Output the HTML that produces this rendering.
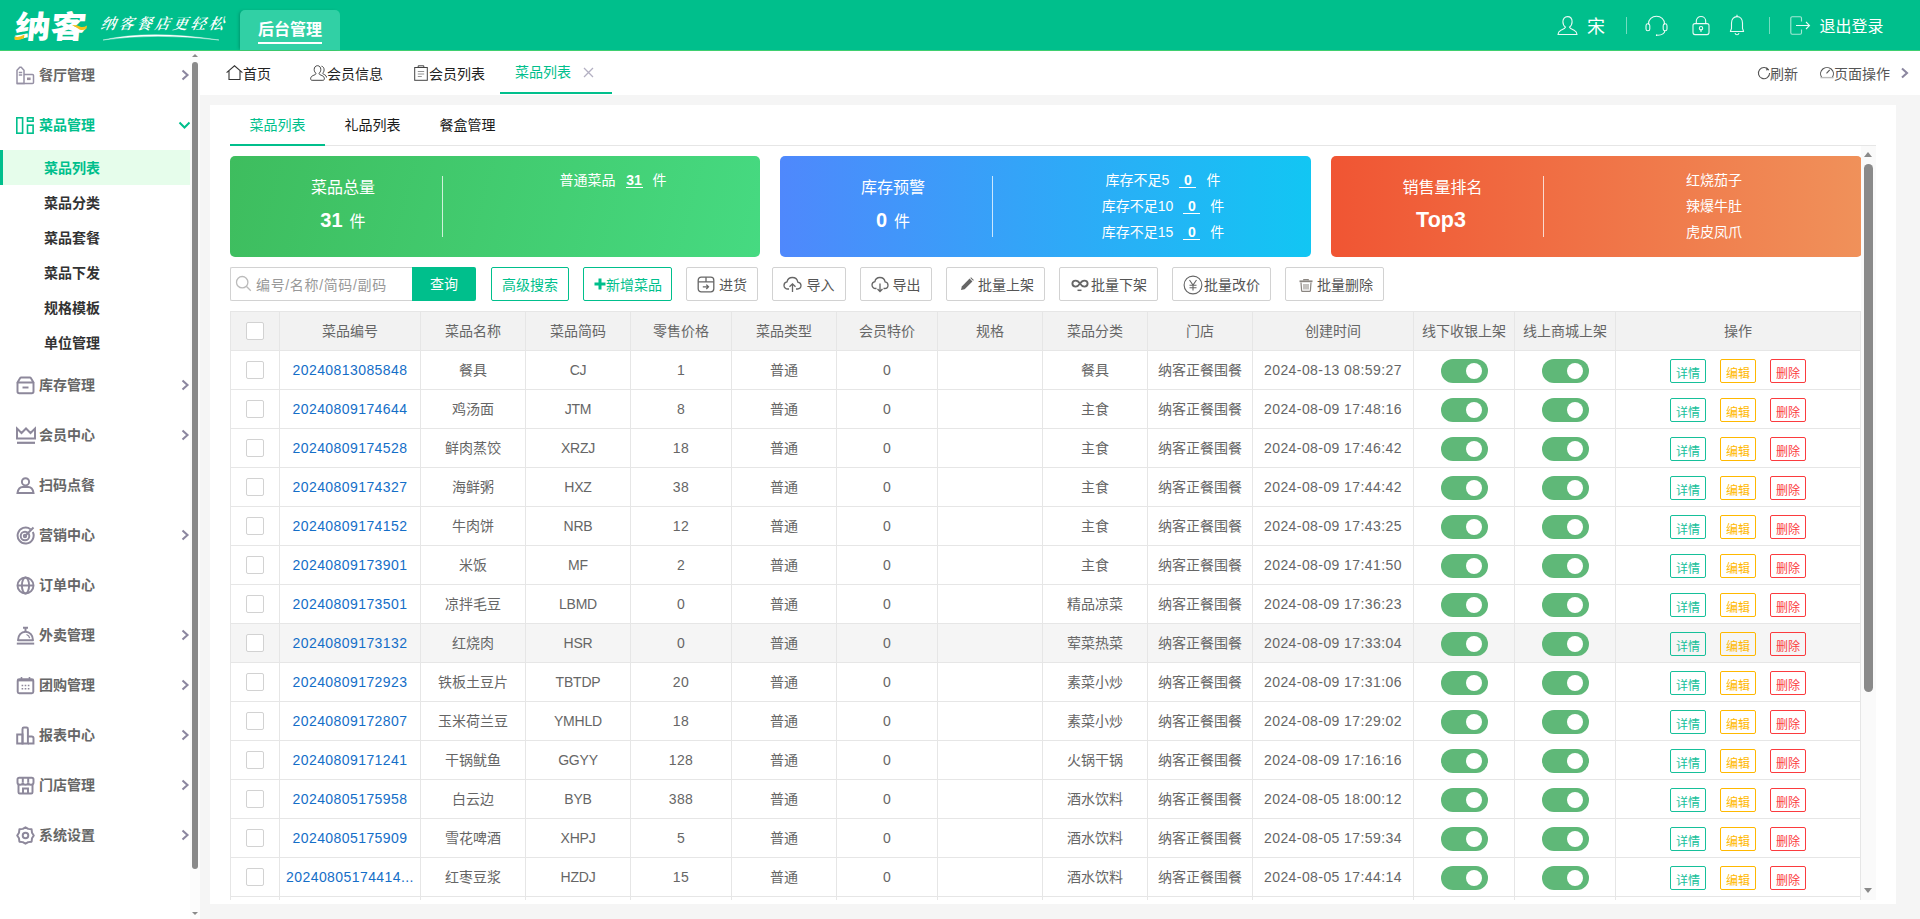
<!DOCTYPE html>
<html lang="zh-CN">
<head>
<meta charset="utf-8">
<title>菜品列表</title>
<style>
*{box-sizing:border-box;margin:0;padding:0}
html,body{width:1920px;height:919px;overflow:hidden;background:#f5f5f5}
body{font-family:"Liberation Sans","Noto Sans CJK SC",sans-serif;font-size:14px;color:#666;position:relative}
i,b{font-style:normal;font-weight:normal}
svg{display:block}
.abs{position:absolute}
/* header */
#hdr{position:absolute;left:0;top:0;width:1920px;height:51px;background:#00bf8c;border-bottom:1px solid #3fcf70;color:#fff}
#logo{position:absolute;left:14px;top:7px;width:76px;height:38px}
#logo span{position:absolute;left:1px;top:.5px;font-size:31px;line-height:40px;font-weight:900;letter-spacing:0;color:#fff;white-space:nowrap;transform:scaleX(1.15) skewX(-5deg);transform-origin:0 50%}
#slogan{position:absolute;left:101px;top:9.500px;width:130px;height:26px;font-family:"Noto Serif CJK SC","Liberation Serif",serif;font-style:italic;font-weight:600;font-size:15px;letter-spacing:3px;line-height:26px;white-space:nowrap;color:#fff;transform:skewX(-10deg)}
#topt{position:absolute;left:240px;top:10px;width:100px;height:40px;background:#31d0a5;border-radius:5px 5px 0 0;box-shadow:-2px 0 3px -1px rgba(0,80,60,.35)}
#topt span{position:absolute;left:18px;top:8px;font-size:16px;font-weight:bold;line-height:24px;white-space:nowrap}
#topt u{position:absolute;left:18px;top:32px;width:64px;height:2px;background:#fff}
.hi{position:absolute;top:0}
.ht{position:absolute;white-space:nowrap;line-height:24px}
.hd{position:absolute;top:17px;width:1px;height:17px;background:rgba(255,255,255,.45)}
/* sidebar */
#side{position:absolute;left:0;top:51px;width:190px;height:868px;background:#fff}
.mi{position:absolute;left:0;width:190px;height:50px}
.mi svg.ic{position:absolute;left:15.500px;top:16px}
.mi span{position:absolute;left:39px;top:13px;line-height:24px;font-weight:bold;color:#666;white-space:nowrap}
.mi svg.ar{position:absolute;left:181px;top:19px}
.mi.on span{color:#00bf8c}
.si{position:absolute;left:0;width:190px;height:35px;line-height:37px;overflow:hidden;padding-left:44px;font-weight:bold;color:#333;white-space:nowrap}
.si.on{background:#e6fdeb;color:#00bf8c;border-left:3px solid #00bf8c;padding-left:41px}
#sb1{position:absolute;left:190px;top:51px;width:10px;height:868px;background:#fcfcfc}
#sb1 i.th{position:absolute;left:2px;top:11px;width:6px;height:807px;border-radius:3px;background:#8a8a8a}
.tri-u{position:absolute;width:0;height:0;border-left:4px solid transparent;border-right:4px solid transparent;border-bottom:4px solid #8a8a8a}
.tri-d{position:absolute;width:0;height:0;border-left:4px solid transparent;border-right:4px solid transparent;border-top:4px solid #8a8a8a}
/* tabs */
#tabs{position:absolute;left:200px;top:51px;width:1720px;height:44px;background:#fff;color:#222}
#tabs .t{position:absolute;top:11px;line-height:24px;white-space:nowrap}
#tabs svg{position:absolute}
/* panel */
#panel{position:absolute;left:210px;top:105px;width:1686px;height:799px;background:#fff}
#sub{position:absolute;left:20px;top:0;width:1646px;height:41px;border-bottom:1px solid #e6e6e6}
#sub span{position:absolute;top:8px;width:95px;text-align:center;line-height:24px;color:#1a1a1a}
#sub span.on{color:#00bf8c}
#sub u{position:absolute;left:0;top:39px;width:95px;height:2px;background:#00bf8c}
#scroll{position:absolute;left:20px;top:41px;width:1646px;height:754px;overflow:hidden}
#sb2{position:absolute;left:1631px;top:0;width:15px;height:754px;background:#fafafa}
#sb2 i.th{position:absolute;left:3px;top:18px;width:9px;height:528px;border-radius:4.5px;background:#8a8a8a}
.card{position:absolute;top:10px;width:530.5px;height:101px;border-radius:5px;color:#fff}
.card .l1{position:absolute;left:33px;width:160px;top:20px;text-align:center;font-size:16px;line-height:24px;white-space:nowrap}
.card .l2{position:absolute;left:33px;width:160px;top:49px;text-align:center;font-size:16px;line-height:30px;white-space:nowrap}
.card .l2 b{font-weight:bold;font-size:20px;margin-right:7px}
.card .dv{position:absolute;left:212px;top:20px;width:1px;height:61px;background:rgba(255,255,255,.75)}
.card .r{position:absolute;left:233px;width:300px;text-align:center;line-height:26px;white-space:nowrap}
.card .r b{display:inline-block;min-width:17px;height:26px;text-align:center;font-weight:bold;margin:0 10px;background:linear-gradient(#fff,#fff) no-repeat 0 20px/100% 1px;vertical-align:top}
/* toolbar */
.btn{position:absolute;top:121px;height:34px;border:1px solid #d2d2d2;border-radius:2px;background:#fff;color:#555;line-height:31px;white-space:nowrap}
.btn span{position:absolute;top:2px;line-height:31px}
.btn svg{position:absolute}
.btn.g{border-color:#00bf8c;color:#00bf8c}
#q{position:absolute;left:0;top:121px;width:183px;height:34px;border:1px solid #d2d2d2;border-right:none;border-radius:2px 0 0 2px;background:#fff}
#q span{position:absolute;left:25px;top:2px;line-height:31px;color:#999;white-space:nowrap;letter-spacing:.65px}
#qb{position:absolute;left:182px;top:121px;width:64px;height:34px;background:#00bf8c;color:#fff;text-align:center;line-height:35px;border-radius:0 2px 2px 0}
/* table */
table{position:absolute;left:0;top:165px;border-collapse:separate;border-spacing:0;table-layout:fixed;width:1631px;border-left:1px solid #e6e6e6;border-top:1px solid #e6e6e6}
th,td{height:39px;border-right:1px solid #e6e6e6;border-bottom:1px solid #e6e6e6;text-align:center;font-weight:normal;white-space:nowrap;overflow:hidden;padding:0;color:#666;vertical-align:middle;line-height:20px}
th{background:#f2f2f2}
tr.hov td{background:#f5f5f5}
td.n{letter-spacing:.42px}
td.c{letter-spacing:-.2px}
td a{color:#146ec8}
.cb{display:inline-block;width:18px;height:18px;border:1px solid #d2d2d2;border-radius:2px;background:#fff;vertical-align:middle;margin-left:0;position:relative;top:-1px}
.sw{display:inline-block;width:47px;height:24px;border-radius:12px;background:#5fb878;vertical-align:middle;position:relative;top:1px}
.sw:after{content:"";position:absolute;left:25px;top:4px;width:16px;height:16px;border-radius:8px;background:#fff}
.op b{display:inline-block;width:36px;height:24px;line-height:29px;overflow:hidden;border:1px solid;border-radius:2px;font-size:12px;margin:0 7px;vertical-align:middle;position:relative;top:1px;left:0;letter-spacing:0;padding-top:0}
.b1{color:#16c09a;border-color:#16c09a}
.b2{color:#ffb800;border-color:#ffc93c}
.b3{color:#fb3b3e;border-color:#fb3b3e}
</style>
</head>
<body>
<div id="hdr">
  <div id="logo"><span>纳客</span>
    <svg class="abs" style="left:0;top:0" width="76" height="38" viewBox="0 0 76 38"><path d="M0.500 29.500 Q5 31 10.500 27.500 L10 31 Q5 34 0.500 32.500Z" fill="#f6c21c"/><path d="M58 18 Q63 17.500 67 20 Q70 20.500 73 18.500 L72.500 21.500 Q69 24 65.500 22.500 Q62 20 58 18Z" fill="#f6c21c"/></svg>
  </div>
  <div id="slogan">纳客餐店更轻松</div>
  <svg class="abs" style="left:100px;top:32px" width="122" height="10" viewBox="0 0 122 10"><path d="M3 8 Q50 -2.500 119 8 Q55 0.500 3 8Z" fill="#fff" stroke="#fff" stroke-width=".4"/></svg>
  <div id="topt"><span>后台管理</span><u></u></div>
  <!-- user -->
  <svg class="hi" style="left:1556px;top:14px" width="23" height="23" viewBox="0 0 23 23" fill="none" stroke="#fff" stroke-opacity=".92" stroke-width="1.100"><path d="M11.5 2.6c2.8 0 4.6 2.2 4.6 5.2 0 2.300-1.100 4.300-2.600 5.300 0.300 1.500 2.500 2.200 4.600 3.200 1.800 0.900 2.800 2.300 2.900 4.200H2c0.100-1.900 1.100-3.300 2.900-4.200 2.100-1 4.300-1.700 4.600-3.200-1.500-1-2.600-3-2.600-5.300 0-3 1.800-5.200 4.600-5.200z"/></svg>
  <span class="ht" style="left:1587px;top:14.500px;font-size:18px">宋</span>
  <i class="hd" style="left:1626px"></i>
  <!-- headset -->
  <svg class="hi" style="left:1644px;top:14px" width="25" height="23" viewBox="0 0 25 23" fill="none" stroke="#fff" stroke-opacity=".92" stroke-width="1.100"><path d="M4.500 10.500V9.800c0-4.300 3.500-7.500 8-7.500s8 3.200 8 7.500v0.700"/><rect x="2" y="9.800" width="3.800" height="7" rx="1.900"/><rect x="19.200" y="9.800" width="3.800" height="7" rx="1.900"/><path d="M20.800 16.800c0 2.400-2.800 4.400-7 4.400"/><circle cx="12.800" cy="21.200" r=".9" fill="#fff" stroke="none"/></svg>
  <!-- lock -->
  <svg class="hi" style="left:1690px;top:14px" width="22" height="23" viewBox="0 0 22 23" fill="none" stroke="#fff" stroke-opacity=".92" stroke-width="1.100"><rect x="3" y="9.600" width="16" height="11" rx="2"/><path d="M6.300 9.600V7c0-2.600 2-4.500 4.700-4.500s4.700 1.900 4.700 4.500v2.600"/><circle cx="11" cy="14.200" r="1.700"/><path d="M11 15.900v2"/></svg>
  <!-- bell -->
  <svg class="hi" style="left:1726px;top:13px" width="22" height="24" viewBox="0 0 22 24" fill="none" stroke="#fff" stroke-opacity=".92" stroke-width="1.100"><path d="M11 3.600c3.300 0 5.500 2.600 5.500 6.300v5.500l1.100 3.100H4.400l1.100-3.100V9.900c0-3.700 2.200-6.300 5.500-6.300z" stroke-linejoin="round"/><path d="M11 1.800v1.800"/><path d="M9 20.200c0.300 1.100 1 1.600 2 1.600s1.700-0.500 2-1.600"/></svg>
  <i class="hd" style="left:1769px"></i>
  <!-- logout -->
  <svg class="hi" style="left:1788px;top:14px" width="24" height="23" viewBox="0 0 24 23" fill="none" stroke="#fff" stroke-opacity=".92" stroke-width="1.100"><path d="M13.500 7.500V4.200c0-0.800-0.600-1.400-1.400-1.400H4.200c-0.800 0-1.400 0.600-1.400 1.400v14.600c0 0.800 0.600 1.400 1.400 1.400h7.900c0.800 0 1.400-0.600 1.400-1.400v-3.300" opacity=".7"/><path d="M8 11.500h13.500M18 8l3.500 3.500L18 15"/></svg>
  <span class="ht" style="left:1819.500px;top:14.500px;font-size:16px">退出登录</span>
</div>

<div id="side">
  <div class="mi" style="top:-1px"><svg class="ic" width="19" height="19" viewBox="0 0 19 19" fill="none" stroke="#9691a5" stroke-width="1.500"><path d="M1 17.500V4.300L3.800 1.200H5.200L8 4.300V17.500Z"/><path d="M8 8.500h8.500c0.600 0 1 0.400 1 1v7c0 0.600-0.400 1-1 1H1"/><path d="M2.800 6.500h3.400M2.800 9h3.400"/><rect x="11" y="11.500" width="3.600" height="2.600" fill="#9a8f9e" stroke="none"/></svg><span>餐厅管理</span><svg class="ar" width="9" height="12" viewBox="0 0 9 12" fill="none" stroke="#8c87a0" stroke-width="2.100"><path d="M1.500 1.500L6.500 6L1.500 10.500"/></svg></div>
  <div class="mi on" style="top:49px"><svg class="ic" width="19" height="19" viewBox="0 0 19 19" fill="none" stroke="#00bf8c" stroke-width="1.600"><rect x="0.800" y="1.800" width="5.800" height="15.400"/><rect x="11.500" y="1.800" width="5.600" height="3.400"/><rect x="11.500" y="9.200" width="5.600" height="8"/></svg><span>菜品管理</span><svg class="ar" style="left:178px;top:20px" width="13" height="10" viewBox="0 0 13 10" fill="none" stroke="#00bf8c" stroke-width="2"><path d="M1.500 2.500L6.500 7.500L11.500 2.500"/></svg></div>
  <div class="si on" style="top:99px">菜品列表</div>
  <div class="si" style="top:134px">菜品分类</div>
  <div class="si" style="top:169px">菜品套餐</div>
  <div class="si" style="top:204px">菜品下发</div>
  <div class="si" style="top:239px">规格模板</div>
  <div class="si" style="top:274px">单位管理</div>
  <div class="mi" style="top:309px"><svg class="ic" width="19" height="19" viewBox="0 0 19 19" fill="none" stroke="#8d889b" stroke-width="1.950"><path d="M1.500 6.500L4 2.200c0.300-0.500 0.700-0.700 1.200-0.700h8.600c0.500 0 0.900 0.200 1.200 0.700L17.500 6.500z" stroke-linejoin="round"/><path d="M1.500 6.500v9c0 1 0.700 1.700 1.700 1.700h12.600c1 0 1.700-0.700 1.700-1.700v-9"/><path d="M6.500 11.500h6"/></svg><span>库存管理</span><svg class="ar" width="9" height="12" viewBox="0 0 9 12" fill="none" stroke="#8c87a0" stroke-width="2.100"><path d="M1.500 1.500L6.500 6L1.500 10.500"/></svg></div>
  <div class="mi" style="top:359px"><svg class="ic" width="20" height="19" viewBox="0 0 20 19" fill="none" stroke="#8d889b" stroke-width="1.950"><path d="M1 2.500L5.500 7L10 2.500L14.500 7L19 2.500V12.500H1Z"/><path d="M1 16.800h18" stroke-width="2.200"/></svg><span>会员中心</span><svg class="ar" width="9" height="12" viewBox="0 0 9 12" fill="none" stroke="#8c87a0" stroke-width="2.100"><path d="M1.500 1.500L6.500 6L1.500 10.500"/></svg></div>
  <div class="mi" style="top:409px"><svg class="ic" width="19" height="19" viewBox="0 0 19 19" fill="none" stroke="#8d889b" stroke-width="1.950"><circle cx="9.500" cy="5.800" r="3.600"/><path d="M1.500 17c0.500-3.500 2.500-6 5.200-6h5.600c2.700 0 4.700 2.500 5.200 6z"/></svg><span>扫码点餐</span></div>
  <div class="mi" style="top:459px"><svg class="ic" width="19" height="19" viewBox="0 0 19 19" fill="none" stroke="#8d889b" stroke-width="1.950"><path d="M14.500 3.200A8 8 0 1 0 16.800 6"/><circle cx="9" cy="10" r="4.300"/><circle cx="9" cy="10" r="1.200"/><path d="M9.500 9.500L17.500 1.500"/></svg><span>营销中心</span><svg class="ar" width="9" height="12" viewBox="0 0 9 12" fill="none" stroke="#8c87a0" stroke-width="2.100"><path d="M1.500 1.500L6.500 6L1.500 10.500"/></svg></div>
  <div class="mi" style="top:509px"><svg class="ic" width="19" height="19" viewBox="0 0 19 19" fill="none" stroke="#8d889b" stroke-width="1.950"><circle cx="9.500" cy="9.500" r="8"/><ellipse cx="9.500" cy="9.500" rx="3.600" ry="8"/><path d="M1.500 9.500h16"/></svg><span>订单中心</span></div>
  <div class="mi" style="top:559px"><svg class="ic" width="19" height="19" viewBox="0 0 19 19" fill="none" stroke="#8d889b" stroke-width="1.950"><path d="M2 14.200c0-4.800 3.200-8.400 7.500-8.400s7.500 3.600 7.500 8.400z" stroke-linejoin="round"/><path d="M0.800 17.600h17.400"/><path d="M7 1.800h5M9.500 1.800v4"/><path d="M10.500 8.500c1.800 0.600 2.900 2 3.200 3.600" stroke-width="1.300"/></svg><span>外卖管理</span><svg class="ar" width="9" height="12" viewBox="0 0 9 12" fill="none" stroke="#8c87a0" stroke-width="2.100"><path d="M1.500 1.500L6.500 6L1.500 10.500"/></svg></div>
  <div class="mi" style="top:609px"><svg class="ic" width="19" height="19" viewBox="0 0 19 19" fill="none" stroke="#8d889b" stroke-width="1.950"><rect x="1.700" y="3.200" width="15.600" height="14" rx="1.500"/><path d="M1.700 4.200h15.600" stroke-width="2.400"/><path d="M5.500 1v3M13.500 1v3" stroke-width="1.600"/><path d="M5.600 9.500h1.600M8.700 9.500h1.600M11.800 9.500h1.600M5.600 12.800h1.600M8.700 12.800h1.600M11.800 12.800h1.600" stroke-width="1.600"/></svg><span>团购管理</span><svg class="ar" width="9" height="12" viewBox="0 0 9 12" fill="none" stroke="#8c87a0" stroke-width="2.100"><path d="M1.500 1.500L6.500 6L1.500 10.500"/></svg></div>
  <div class="mi" style="top:659px"><svg class="ic" width="19" height="19" viewBox="0 0 19 19" fill="none" stroke="#8d889b" stroke-width="1.950"><path d="M1.200 17.500V8.500h5.300v9z"/><path d="M6.500 17.500V3c0-0.800 0.600-1.500 1.400-1.500h2.600c0.800 0 1.400 0.700 1.400 1.500v14.500z"/><path d="M11.900 10.500h3.800c1 0 1.800 0.800 1.800 1.800v5.200h-5.600"/></svg><span>报表中心</span><svg class="ar" width="9" height="12" viewBox="0 0 9 12" fill="none" stroke="#8c87a0" stroke-width="2.100"><path d="M1.500 1.500L6.500 6L1.500 10.500"/></svg></div>
  <div class="mi" style="top:709px"><svg class="ic" width="19" height="19" viewBox="0 0 19 19" fill="none" stroke="#8d889b" stroke-width="1.950"><path d="M2.500 9v7.200c0 0.700 0.500 1.200 1.200 1.200h11.600c0.700 0 1.200-0.500 1.200-1.200V9"/><path d="M1.500 3.500c0-1 0.700-1.700 1.700-1.700h12.600c1 0 1.700 0.700 1.700 1.700v3c0 1.200-1 2.200-2.600 2.200s-2.700-1-2.700-2.200c0 1.200-1.100 2.200-2.700 2.200S6.800 7.700 6.800 6.500c0 1.200-1.100 2.200-2.700 2.200S1.500 7.700 1.500 6.500z"/><path d="M6.800 2v4.500M12.200 2v4.500"/><path d="M7 17.200v-4.700h5v4.700"/></svg><span>门店管理</span><svg class="ar" width="9" height="12" viewBox="0 0 9 12" fill="none" stroke="#8c87a0" stroke-width="2.100"><path d="M1.500 1.500L6.500 6L1.500 10.500"/></svg></div>
  <div class="mi" style="top:759px"><svg class="ic" width="19" height="19" viewBox="0 0 19 19" fill="none" stroke="#8d889b" stroke-width="1.950"><path d="M9.500 1.300L12.200 2.900L15.600 3.300L16 6.700L17.800 9.500L16 12.300L15.600 15.700L12.200 16.100L9.500 17.700L6.800 16.100L3.400 15.700L3 12.300L1.200 9.500L3 6.700L3.400 3.300L6.800 2.900Z" stroke-linejoin="round"/><circle cx="9.500" cy="9.500" r="2.800"/></svg><span>系统设置</span><svg class="ar" width="9" height="12" viewBox="0 0 9 12" fill="none" stroke="#8c87a0" stroke-width="2.100"><path d="M1.500 1.500L6.500 6L1.500 10.500"/></svg></div>
</div>
<div id="sb1"><i class="tri-u" style="left:1.500px;top:3px;border-left-width:3.500px;border-right-width:3.500px;border-bottom-width:3.500px"></i><i class="th"></i><i class="tri-d" style="left:1.500px;top:861px;border-left-width:3.500px;border-right-width:3.500px;border-top-width:3.500px"></i></div>

<div id="tabs">
  <svg style="left:26px;top:14px" width="17" height="16" viewBox="0 0 17 16" fill="none" stroke="#333" stroke-width="1.100"><path d="M0.600 7.600L8.500 0.800L16.400 7.600M3 5.800v8.700h11V5.800"/></svg>
  <span class="t" style="left:43px">首页</span>
  <svg style="left:110px;top:14px" width="17" height="16" viewBox="0 0 17 16" fill="none" stroke="#444" stroke-width="1"><path d="M7.500 0.700c2 0 3.300 1.600 3.300 3.800 0 1.700-0.800 3.200-1.900 3.900 0.200 1.100 1.800 1.600 3.400 2.300 1.300 0.600 2 1.700 2.100 3.100 0 0.800-0.500 1.500-1.500 1.500H2.100c-1 0-1.500-0.700-1.500-1.500 0.100-1.400 0.800-2.500 2.100-3.100 1.600-0.700 3.200-1.200 3.400-2.300-1.100-0.700-1.900-2.200-1.900-3.900 0-2.200 1.300-3.800 3.300-3.800z"/><path d="M11.500 1.200c1.700 0.300 2.600 1.800 2.600 3.600 0 1.500-0.600 2.700-1.500 3.400 0.300 0.900 1.500 1.200 2.500 1.800 0.900 0.500 1.400 1.300 1.400 2.500"/></svg>
  <span class="t" style="left:127px">会员信息</span>
  <svg style="left:214px;top:14px" width="14" height="16" viewBox="0 0 14 16" fill="none" stroke="#444" stroke-width="1"><rect x="0.700" y="2.500" width="12.600" height="12.800"/><path d="M4.200 2.500V0.800h5.600v1.700"/><path d="M3.800 6.500h6.400M3.800 9h6.400M3.800 11.500h4" stroke="#888" stroke-width=".9"/></svg>
  <span class="t" style="left:229px">会员列表</span>
  <span class="t" style="left:315px;top:9px;color:#00bf8c">菜品列表</span>
  <svg style="left:383px;top:16px" width="11" height="11" viewBox="0 0 11 11" fill="none" stroke="#b3b0c2" stroke-width="1.300"><path d="M1 1l9 9M10 1l-9 9"/></svg>
  <i class="abs" style="left:300px;top:41px;width:112px;height:2px;background:#00bf8c"></i>
  <svg style="left:1557px;top:15px" width="14" height="14" viewBox="0 0 14 14" fill="none" stroke="#555" stroke-width="1.100"><path d="M11.800 4.200A5.600 5.600 0 1 0 12.600 7"/><path d="M9.500 1.200l2.600 2.600-3 0.800z" fill="#555" stroke="none"/></svg>
  <span class="t" style="left:1570px;color:#555">刷新</span>
  <svg style="left:1619px;top:14px" width="16" height="14" viewBox="0 0 16 14" fill="none" stroke="#555" stroke-width="1.100"><path d="M2.600 12.300A6.400 6.400 0 1 1 13.400 12.300"/><path d="M1.500 12.600h13" stroke="#bbb" stroke-width="1.400"/><path d="M7.500 8.300l3.200-3.400"/></svg>
  <span class="t" style="left:1634px;color:#555">页面操作</span>
  <svg style="left:1700px;top:16px" width="10" height="12" viewBox="0 0 10 12" fill="none" stroke="#8c87a0" stroke-width="2.100"><path d="M2 1.500L7 6L2 10.500"/></svg>
</div>

<div id="panel">
  <div id="sub"><span class="on" style="left:0">菜品列表</span><span style="left:95px">礼品列表</span><span style="left:190px">餐盒管理</span><u></u></div>
  <div id="scroll">
    <div class="card" style="left:0;width:530px;background:linear-gradient(105deg,#3ebd5e,#46da81)">
      <div class="l1">菜品总量</div><div class="l2"><b>31</b>件</div><i class="dv"></i>
      <div class="r" style="top:11px">普通菜品<b>31</b>件</div>
    </div>
    <div class="card" style="left:550px;background:linear-gradient(90deg,#4f88fc,#12c6f3)">
      <div class="l1">库存预警</div><div class="l2"><b>0</b>件</div><i class="dv"></i>
      <div class="r" style="top:11px">库存不足5<b>0</b>件</div>
      <div class="r" style="top:37px">库存不足10<b>0</b>件</div>
      <div class="r" style="top:63px">库存不足15<b>0</b>件</div>
    </div>
    <div class="card" style="left:1101px;background:linear-gradient(90deg,#f05533,#f0915a)">
      <div class="l1" style="left:31.500px">销售量排名</div><div class="l2" style="left:30px"><b style="font-size:21.500px;margin:0">Top3</b></div><i class="dv"></i>
      <div class="r" style="top:11px">红烧茄子</div>
      <div class="r" style="top:37px">辣爆牛肚</div>
      <div class="r" style="top:63px">虎皮凤爪</div>
    </div>
    <div id="q"><svg class="abs" style="left:4px;top:7px" width="17" height="17" viewBox="0 0 17 17" fill="none" stroke="#bbb" stroke-width="1.300"><circle cx="7.200" cy="7.200" r="5.700"/><path d="M11.300 11.300L15.800 15.800"/></svg><span>编号/名称/简码/副码</span></div>
    <div id="qb">查询</div>
    <div class="btn g" style="left:261px;width:78px"><span style="left:10px">高级搜索</span></div>
    <div class="btn g" style="left:353px;width:89px"><svg style="left:10px;top:10px" width="12" height="12" viewBox="0 0 12 12"><path d="M4.500 0.500h3v4h4v3h-4v4h-3v-4h-4v-3h4z" fill="#00bf8c"/></svg><span style="left:22px">新增菜品</span></div>
    <div class="btn" style="left:456px;width:72px"><svg style="left:10px;top:8px" width="18" height="17" viewBox="0 0 18 17" fill="none" stroke="#666" stroke-width="1.300"><rect x="1.200" y="1.200" width="15.600" height="14.600" rx="3"/><path d="M1.200 5.800h15.600M9 1.200v4.600"/><path d="M5.800 10.800h5.500M9.300 8.600l2.200 2.200-2.200 2.200"/></svg><span style="left:32px">进货</span></div>
    <div class="btn" style="left:542px;width:74px"><svg style="left:10px;top:8px" width="19" height="17" viewBox="0 0 19 17" fill="none" stroke="#666" stroke-width="1.300"><path d="M6 13H4.800C2.700 13 1 11.400 1 9.400c0-1.800 1.300-3.200 3-3.500C4.500 3.300 6.700 1.500 9.300 1.500c2.800 0 5.100 2 5.500 4.600 1.800 0.300 3.200 1.700 3.200 3.500 0 1.900-1.600 3.400-3.600 3.400H13"/><path d="M9.500 16V8M6.500 10.800l3-3 3 3"/></svg><span style="left:33.500px">导入</span></div>
    <div class="btn" style="left:630px;width:72px"><svg style="left:10px;top:8px" width="18" height="17" viewBox="0 0 18 17" fill="none" stroke="#666" stroke-width="1.300"><path d="M5.500 12.500H4.600C2.600 12.500 1 10.900 1 9c0-1.700 1.200-3.100 2.900-3.400C4.300 3.200 6.400 1.500 8.900 1.500c2.600 0 4.800 1.900 5.200 4.400 1.700 0.300 2.900 1.600 2.900 3.300 0 1.800-1.500 3.300-3.400 3.300h-1.100"/><path d="M9 7.500v8M6.500 13l2.500 2.500 2.500-2.500"/></svg><span style="left:31.500px">导出</span></div>
    <div class="btn" style="left:716px;width:99px"><svg style="left:13px;top:9px" width="14" height="14" viewBox="0 0 14 14"><path d="M1 13l0.800-3.600L9.600 1.600l2.800 2.800-7.800 7.800z" fill="#666"/><path d="M10.300 0.900l0.700-0.700 2.800 2.800-0.700 0.700z" fill="#666"/></svg><span style="left:31px">批量上架</span></div>
    <div class="btn" style="left:829px;width:99px"><svg style="left:11px;top:10px" width="18" height="14" viewBox="0 0 18 14" fill="none" stroke="#666" stroke-width="1.900"><path d="M9 5.600C7.700 3.600 6.300 2.600 4.700 2.600c-1.900 0-3.300 1.300-3.300 3s1.400 3 3.300 3c1.600 0 3-1 4.300-3 1.300-2 2.700-3 4.300-3 1.900 0 3.300 1.300 3.300 3s-1.400 3-3.300 3c-1.600 0-3-1-4.300-3z"/><path d="M6.500 12.300h4" stroke-width="1.500"/></svg><span style="left:31px">批量下架</span></div>
    <div class="btn" style="left:942px;width:99px"><svg style="left:10px;top:7px" width="20" height="20" viewBox="0 0 20 20" fill="none" stroke="#666" stroke-width="1.100"><circle cx="10" cy="10" r="8.900"/><path d="M6.500 5l3.500 5 3.500-5M10 10v5.500M6.500 10.200h7M6.500 12.800h7"/></svg><span style="left:31px">批量改价</span></div>
    <div class="btn" style="left:1055px;width:99px"><svg style="left:13px;top:11px" width="14" height="13" viewBox="0 0 14 13" fill="none" stroke="#8a8580" stroke-width="1.200"><path d="M0.500 2.300h13" stroke-width="1.800"/><path d="M4.800 1.600V0.600h4.400v1"/><path d="M2 3.500l0.600 8c0 0.500 0.400 0.900 0.900 0.900h7c0.500 0 0.900-0.400 0.900-0.900l0.600-8"/><path d="M5 5v5.500M7 5v5.500M9 5v5.500" stroke-width="1"/></svg><span style="left:31px">批量删除</span></div>
    <table>
      <colgroup><col style="width:49px"><col style="width:141px"><col style="width:105px"><col style="width:105px"><col style="width:101px"><col style="width:105px"><col style="width:101px"><col style="width:105px"><col style="width:105px"><col style="width:105px"><col style="width:161px"><col style="width:101px"><col style="width:101px"><col style="width:245px"></colgroup>
      <tr><th><i class="cb"></i></th><th>菜品编号</th><th>菜品名称</th><th>菜品简码</th><th>零售价格</th><th>菜品类型</th><th>会员特价</th><th>规格</th><th>菜品分类</th><th>门店</th><th>创建时间</th><th>线下收银上架</th><th>线上商城上架</th><th>操作</th></tr>
<tr><td><i class="cb"></i></td><td class="n"><a>20240813085848</a></td><td>餐具</td><td class="c">CJ</td><td class="n">1</td><td>普通</td><td class="n">0</td><td></td><td>餐具</td><td>纳客正餐围餐</td><td class="n">2024-08-13 08:59:27</td><td><i class="sw"></i></td><td><i class="sw"></i></td><td class="op"><b class="b1">详情</b><b class="b2">编辑</b><b class="b3">删除</b></td></tr>
<tr><td><i class="cb"></i></td><td class="n"><a>20240809174644</a></td><td>鸡汤面</td><td class="c">JTM</td><td class="n">8</td><td>普通</td><td class="n">0</td><td></td><td>主食</td><td>纳客正餐围餐</td><td class="n">2024-08-09 17:48:16</td><td><i class="sw"></i></td><td><i class="sw"></i></td><td class="op"><b class="b1">详情</b><b class="b2">编辑</b><b class="b3">删除</b></td></tr>
<tr><td><i class="cb"></i></td><td class="n"><a>20240809174528</a></td><td>鲜肉蒸饺</td><td class="c">XRZJ</td><td class="n">18</td><td>普通</td><td class="n">0</td><td></td><td>主食</td><td>纳客正餐围餐</td><td class="n">2024-08-09 17:46:42</td><td><i class="sw"></i></td><td><i class="sw"></i></td><td class="op"><b class="b1">详情</b><b class="b2">编辑</b><b class="b3">删除</b></td></tr>
<tr><td><i class="cb"></i></td><td class="n"><a>20240809174327</a></td><td>海鲜粥</td><td class="c">HXZ</td><td class="n">38</td><td>普通</td><td class="n">0</td><td></td><td>主食</td><td>纳客正餐围餐</td><td class="n">2024-08-09 17:44:42</td><td><i class="sw"></i></td><td><i class="sw"></i></td><td class="op"><b class="b1">详情</b><b class="b2">编辑</b><b class="b3">删除</b></td></tr>
<tr><td><i class="cb"></i></td><td class="n"><a>20240809174152</a></td><td>牛肉饼</td><td class="c">NRB</td><td class="n">12</td><td>普通</td><td class="n">0</td><td></td><td>主食</td><td>纳客正餐围餐</td><td class="n">2024-08-09 17:43:25</td><td><i class="sw"></i></td><td><i class="sw"></i></td><td class="op"><b class="b1">详情</b><b class="b2">编辑</b><b class="b3">删除</b></td></tr>
<tr><td><i class="cb"></i></td><td class="n"><a>20240809173901</a></td><td>米饭</td><td class="c">MF</td><td class="n">2</td><td>普通</td><td class="n">0</td><td></td><td>主食</td><td>纳客正餐围餐</td><td class="n">2024-08-09 17:41:50</td><td><i class="sw"></i></td><td><i class="sw"></i></td><td class="op"><b class="b1">详情</b><b class="b2">编辑</b><b class="b3">删除</b></td></tr>
<tr><td><i class="cb"></i></td><td class="n"><a>20240809173501</a></td><td>凉拌毛豆</td><td class="c">LBMD</td><td class="n">0</td><td>普通</td><td class="n">0</td><td></td><td>精品凉菜</td><td>纳客正餐围餐</td><td class="n">2024-08-09 17:36:23</td><td><i class="sw"></i></td><td><i class="sw"></i></td><td class="op"><b class="b1">详情</b><b class="b2">编辑</b><b class="b3">删除</b></td></tr>
<tr class="hov"><td><i class="cb"></i></td><td class="n"><a>20240809173132</a></td><td>红烧肉</td><td class="c">HSR</td><td class="n">0</td><td>普通</td><td class="n">0</td><td></td><td>荤菜热菜</td><td>纳客正餐围餐</td><td class="n">2024-08-09 17:33:04</td><td><i class="sw"></i></td><td><i class="sw"></i></td><td class="op"><b class="b1">详情</b><b class="b2">编辑</b><b class="b3">删除</b></td></tr>
<tr><td><i class="cb"></i></td><td class="n"><a>20240809172923</a></td><td>铁板土豆片</td><td class="c">TBTDP</td><td class="n">20</td><td>普通</td><td class="n">0</td><td></td><td>素菜小炒</td><td>纳客正餐围餐</td><td class="n">2024-08-09 17:31:06</td><td><i class="sw"></i></td><td><i class="sw"></i></td><td class="op"><b class="b1">详情</b><b class="b2">编辑</b><b class="b3">删除</b></td></tr>
<tr><td><i class="cb"></i></td><td class="n"><a>20240809172807</a></td><td>玉米荷兰豆</td><td class="c">YMHLD</td><td class="n">18</td><td>普通</td><td class="n">0</td><td></td><td>素菜小炒</td><td>纳客正餐围餐</td><td class="n">2024-08-09 17:29:02</td><td><i class="sw"></i></td><td><i class="sw"></i></td><td class="op"><b class="b1">详情</b><b class="b2">编辑</b><b class="b3">删除</b></td></tr>
<tr><td><i class="cb"></i></td><td class="n"><a>20240809171241</a></td><td>干锅鱿鱼</td><td class="c">GGYY</td><td class="n">128</td><td>普通</td><td class="n">0</td><td></td><td>火锅干锅</td><td>纳客正餐围餐</td><td class="n">2024-08-09 17:16:16</td><td><i class="sw"></i></td><td><i class="sw"></i></td><td class="op"><b class="b1">详情</b><b class="b2">编辑</b><b class="b3">删除</b></td></tr>
<tr><td><i class="cb"></i></td><td class="n"><a>20240805175958</a></td><td>白云边</td><td class="c">BYB</td><td class="n">388</td><td>普通</td><td class="n">0</td><td></td><td>酒水饮料</td><td>纳客正餐围餐</td><td class="n">2024-08-05 18:00:12</td><td><i class="sw"></i></td><td><i class="sw"></i></td><td class="op"><b class="b1">详情</b><b class="b2">编辑</b><b class="b3">删除</b></td></tr>
<tr><td><i class="cb"></i></td><td class="n"><a>20240805175909</a></td><td>雪花啤酒</td><td class="c">XHPJ</td><td class="n">5</td><td>普通</td><td class="n">0</td><td></td><td>酒水饮料</td><td>纳客正餐围餐</td><td class="n">2024-08-05 17:59:34</td><td><i class="sw"></i></td><td><i class="sw"></i></td><td class="op"><b class="b1">详情</b><b class="b2">编辑</b><b class="b3">删除</b></td></tr>
<tr><td><i class="cb"></i></td><td class="n"><a>20240805174414...</a></td><td>红枣豆浆</td><td class="c">HZDJ</td><td class="n">15</td><td>普通</td><td class="n">0</td><td></td><td>酒水饮料</td><td>纳客正餐围餐</td><td class="n">2024-08-05 17:44:14</td><td><i class="sw"></i></td><td><i class="sw"></i></td><td class="op"><b class="b1">详情</b><b class="b2">编辑</b><b class="b3">删除</b></td></tr>
<tr><td><i class="cb"></i></td><td class="n"><a>20240805174302</a></td><td>油条</td><td class="c">YT</td><td class="n">3</td><td>普通</td><td class="n">0</td><td></td><td>主食</td><td>纳客正餐围餐</td><td class="n">2024-08-05 17:43:30</td><td><i class="sw"></i></td><td><i class="sw"></i></td><td class="op"><b class="b1">详情</b><b class="b2">编辑</b><b class="b3">删除</b></td></tr>
    </table>
    <div id="sb2"><i class="tri-u" style="left:3px;top:6px;border-left-width:4.500px;border-right-width:4.500px;border-bottom-width:5px"></i><i class="th"></i><i class="tri-d" style="left:3px;top:742px;border-left-width:4.500px;border-right-width:4.500px;border-top-width:5px"></i></div>
  </div>
</div>

</body>
</html>
